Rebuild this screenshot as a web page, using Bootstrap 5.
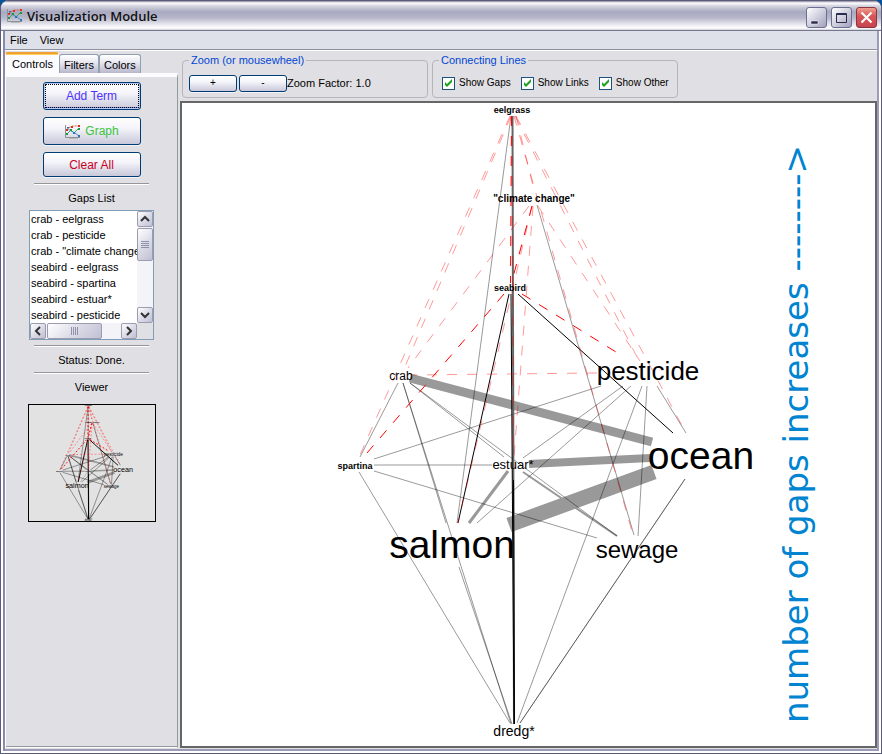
<!DOCTYPE html>
<html lang="en">
<head>
<meta charset="utf-8">
<meta name="viewport" content="width=device-width, initial-scale=1">
<title>Visualization Module</title>
<link href="https://cdn.jsdelivr.net/npm/bootstrap@5.3.0/dist/css/bootstrap.min.css" rel="stylesheet">
<style>
  body { font: 11px/16px "Liberation Sans", Arial, sans-serif; color: #000; background: #00539c; }
  .app-window { background: #e0dfe3; border: 1px solid #5c5b78; border-radius: 8px 8px 0 0; box-shadow: inset 2px 0 #fff, inset -2px -2px #fff, inset 4px 0 #8b8aab, inset -4px -4px #9c9bb8; padding: 0 4px 5px 4px; }
  .title-bar { height: 30px; margin: 0 -4px; padding: 0 4px 0 5px; border-radius: 7px 7px 0 0; border-bottom: 1px solid #77778f;
    background: linear-gradient(#85849c 0, #fff 2px, #d4d4e0 5px, #a8a8c0 11px, #b8b8cc 17px, #e4e4ec 23px, #fff 27px, #b8b8c8 30px); }
  .title-bar h1 { font: 600 13px/18px "Open Sans", "Noto Sans", sans-serif; color: #111; }
  .win-btn { width: 21px; height: 21px; padding: 0; border: 1px solid #6a7090; border-radius: 3px; background: linear-gradient(135deg, #fff, #d0d0e0 50%, #a0a0bc); }
  .win-close { border-color: #8c3440; background: linear-gradient(#f0a090, #d85858 40%, #c84450); }
  .menu-bar { height: 19px; padding: 0 5px; background: #dee1ea; border-bottom: 1px solid #8f8fa0; box-shadow: 0 1px #fff; }
  .menu-bar button { border: 0; background: none; padding: 0; color: #000; line-height: 16px; }
  .work-area { padding-top: 2px; min-height: 0; }
  .side-pane { width: 173px; }
  .main-pane { min-width: 0; padding-left: 2px; }
  .tab-strip { height: 21px; }
  .tab-strip button { border: 1px solid #91a0b0; border-bottom: 0; border-radius: 3px 3px 0 0; background: linear-gradient(#fff, #e8e8f0 40%, #b8b8cc); padding: 2px 4px 0; height: 19px; line-height: 16px; color: #000; }
  .tab-strip .tab-on { height: 21px; border-color: #fcfcfe; border-top: 2px solid #f0a030; background: linear-gradient(#ffd060 1px, #fcfcfe 1px); padding: 0 6px; width: 54px; }
  .tab-body { border: 1px solid #fcfcfe; border-top: 4px solid #fcfcfe; border-right: 1px solid #8f9c98; padding-top: 5px; box-shadow: inset 0 -1px #8f9c98; }
  .xp-btn { border: 1px solid #003c74; border-radius: 3px; background: linear-gradient(#fff, #f4f4fa 40%, #c8c8da); box-shadow: 0 1px #f4f4f8; padding: 0; color: #000; }
  .action-list { display: grid; gap: 7px; }
  .side-btn { width: 98px; height: 28px; font-size: 12px; }
  .side-btn.add { color: #4c33ff; box-shadow: inset 0 0 0 1px #b8c8f4, inset 0 -2px #7a8ee0; outline: 1px dotted #000; outline-offset: -3px; }
  .side-btn.graph { color: #3cc43c; }
  .side-btn.clear { color: #cc0022; height: 25px; }
  .etched { width: 115px; height: 2px; margin: 6px 0 5px; border-top: 1px solid #969698; border-bottom: 1px solid #fff; }
  .etched + div { margin-bottom: -2px; }
  .gap-box { width: 125px; border: 1px solid #7f9db9; display: grid; grid-template-columns: 1fr 16px; grid-template-rows: 112px 16px; }
  .gap-box + .etched { margin-top: 5px; }
  .gap-box select { appearance: none; border: 0; border-radius: 0; padding: 2px 0 0; margin: 0; background: #fff; overflow: hidden; scrollbar-width: none; height: 112px; width: 100%; outline: 0; font: inherit; color: #000; }
  .gap-box select::-webkit-scrollbar { display: none; }
  .gap-box option { padding: 0 1px; min-height: 16px; line-height: 16px; }
  .track { background: #f4f4f8; }
  .track button { width: 16px; height: 16px; border: 1px solid #9c9cb0; border-radius: 2px; background: linear-gradient(135deg, #fff, #dcdce8 50%, #c0c0d4); padding: 0; line-height: 0; }
  .track .thumb-v { height: 33px; margin-top: 1px; }
  .track .thumb-h { width: 55px; margin-left: 1px; }
  .viewer { width: 128px; height: 118px; margin-top: 11px; border: 1px solid #000; background: #e2e2e2; --hair: 5px; }
  .tool-bar { gap: 4px; padding: 0 0 3px 2px; }
  .tool-box { border: 1px solid #b8b4bc; border-radius: 4px; height: 46px; padding: 0 6px; }
  .tool-box legend { float: none; width: auto; font-size: 11px; line-height: 16px; padding: 0 2px; margin: 0; color: #0046d5; }
  .zoom-box, .line-box { width: 246px; }
  .line-box > div { padding-left: 3px; }
  .tool-row { height: 30px; white-space: nowrap; }
  .zoom-btn { width: 48px; height: 17px; font-size: 10px; line-height: 14px; margin-right: 2px; }
  .zoom-btn + .zoom-btn { margin-right: 0; }
  .check { appearance: none; flex: none; width: 13px; height: 13px; margin: 0; border: 1px solid #1c5180; background: linear-gradient(135deg, #dcdcd7, #fff); }
  .check:checked { background: #fff url("data:image/svg+xml,%3Csvg xmlns='http://www.w3.org/2000/svg' viewBox='0 0 11 11'%3E%3Cpath d='M2 4v3l2 2 5-5V1L4 6z' fill='%2321a121'/%3E%3C/svg%3E") center/11px; }
  .line-box label { font-size: 10px; margin: 0 10px 0 4px; }
  .canvas-frame { border: 2px solid #666; background: #fff; min-height: 0; --hair: 1px; }
  .edge { stroke: #000; stroke-opacity: .4; stroke-width: var(--hair); fill: none; }
  .solid { stroke: #000; stroke-width: var(--hair); fill: none; }
  .gap-soft { stroke: #f00; stroke-opacity: .4; stroke-width: var(--hair); stroke-dasharray: 10 10; fill: none; }
  .gap-hard { stroke: #f00; stroke-width: var(--hair); stroke-dasharray: 10 10; fill: none; }
  .band { stroke: #999; fill: none; }
  .node { text-anchor: middle; font-family: "Liberation Sans", Arial, sans-serif; fill: #000; }
  .axis-note { font: 34px "DejaVu Sans", Verdana, sans-serif; fill: #0084d1; }
</style>
<script src="https://cdn.jsdelivr.net/npm/bootstrap@5.3.0/dist/js/bootstrap.bundle.min.js"></script>
</head>
<body>
<svg width="0" height="0" class="position-absolute" aria-hidden="true">
  <defs>
    <symbol id="chart" viewBox="0 0 17 15">
      <path d="M1.500 1v12.500H16" fill="none" stroke="#8c9096"/><path d="M5 14.500h9" stroke="#bbb"/>
      <path d="M3 10l4-4 3 3 5-5" fill="none" stroke="#35a555"/>
      <path d="M3 4l4 3 4 2 4 3" fill="none" stroke="#4a90c0"/>
      <path d="M3 6l3-3 3-1h6" fill="none" stroke="#e06040" stroke-dasharray="2 1"/>
      <path d="M2 5h2v2H2zM7 2h2v2H7zM14 1h2v2h-2z" fill="#e03020"/>
      <path d="M2 9h2v2H2zM6 5h2v2H6zM14 4h2v2h-2z" fill="#18983c"/>
      <path d="M9 8h2v2H9zM14 11h2v2h-2zM3 3h2v1H3z" fill="#2878b8"/>
    </symbol>
    <g id="net">
      <path class="band" stroke-width="9" d="M410 378L652 442"/>
      <path class="band" stroke-width="8" d="M529 464L650 458"/>
      <path class="band" stroke-width="15" d="M509 525L654 472"/>
      <path class="band" stroke-width="3" d="M508 471L469 523"/>
      <path class="band" stroke-width="2" d="M523 472L617 536"/>
      <path class="edge" d="M511 116L457 523"/>
      <path class="edge" d="M537 205L634 535"/>
      <path class="edge" d="M410 383L504 457"/>
      <path class="edge" d="M410 383L617 536"/>
      <path class="edge" d="M403 383L446 523"/>
      <path class="edge" d="M403 383L511 724"/>
      <path class="edge" d="M459 567L512 724"/>
      <path class="edge" d="M398 383L360 457"/>
      <path class="edge" d="M374 459L601 386"/>
      <path class="edge" d="M374 465L492 465"/>
      <path class="edge" d="M374 471L597 538"/>
      <path class="edge" d="M359 472L510 723"/>
      <path class="edge" d="M623 386L523 458"/>
      <path class="edge" d="M631 386L477 523"/>
      <path class="edge" d="M642 386L517 723"/>
      <path class="edge" d="M647 386L638 536"/>
      <path class="edge" d="M657 386L686 433"/>
      <path class="edge" d="M685 479L520 723"/>
      <path class="edge" d="M685 479L520 723"/>
      <path stroke="#666" stroke-width="2" d="M512.500 116L514 724"/>
      <path class="solid" d="M511 294L514 724"/>
      <path class="solid" d="M513.500 480L514.500 724"/>
      <path class="solid" d="M509 294L458 523"/>
      <path class="solid" d="M518 294L673 433"/>
      <path class="gap-soft" d="M511 116L404 369"/>
      <path class="gap-soft" d="M510 116L360 455"/>
      <path class="gap-soft" d="M515 116L639 361"/>
      <path class="gap-soft" d="M516 116L686 433"/>
      <path class="gap-soft" d="M516 116L534 190"/>
      <path class="gap-soft" d="M514 116L633 535"/>
      <path class="gap-soft" d="M512 116L513 455"/>
      <path class="gap-soft" d="M529 206L408 368"/>
      <path class="gap-soft" d="M532 206L458 523"/>
      <path class="gap-soft" d="M533 206L514 457"/>
      <path class="gap-soft" d="M538 206L640 361"/>
      <path class="gap-soft" d="M597 373L413 375"/>
      <path class="gap-hard" d="M511.500 116L510.500 283"/>
      <path class="gap-hard" d="M532 206L512 281"/>
      <path class="gap-hard" d="M504 294L367 453"/>
      <path class="gap-hard" d="M522 294L616 352"/>
      <text class="node" x="512" y="113" font-size="9" font-weight="700">eelgrass</text>
      <text class="node" x="534" y="202" font-size="10" font-weight="700">"climate change"</text>
      <text class="node" x="510" y="291" font-size="9" font-weight="700">seabird</text>
      <text class="node" x="355" y="469" font-size="9" font-weight="700">spartina</text>
      <text class="node" x="401" y="380" font-size="12">crab</text>
      <text class="node" x="513" y="469" font-size="13">estuar*</text>
      <text class="node" x="514" y="736" font-size="14">dredg*</text>
      <text class="node" x="648" y="380" font-size="26">pesticide</text>
      <text class="node" x="637" y="558" font-size="24">sewage</text>
      <text class="node" x="701" y="469" font-size="39">ocean</text>
      <text class="node" x="452" y="558" font-size="39">salmon</text>
    </g>
  </defs>
</svg>

<div class="app-window vh-100 d-flex flex-column">
  <header class="title-bar d-flex align-items-center gap-1 flex-shrink-0">
    <svg width="17" height="15"><use href="#chart"/></svg>
    <h1 class="m-0 me-auto">Visualization Module</h1>
    <div class="d-flex gap-1 pt-1">
      <button class="win-btn d-flex" aria-label="Minimize"><svg width="19" height="19"><path d="M4 13h7v3H4z" fill="#2c2c4c" stroke="#fff" stroke-width=".5"/></svg></button>
      <button class="win-btn d-flex" aria-label="Maximize"><svg width="19" height="19"><path d="M4.500 5.500h10v9h-10zM4 6.500h11" fill="none" stroke="#2c2c4c"/></svg></button>
      <button class="win-btn win-close d-flex" aria-label="Close"><svg width="19" height="19"><path d="M4.500 4.500l10 10M14.500 4.500l-10 10" stroke="#fff" stroke-width="2.200"/></svg></button>
    </div>
  </header>
  <nav class="menu-bar d-flex align-items-center gap-2 flex-shrink-0" aria-label="Menu">
    <button class="me-1">File</button><button>View</button>
  </nav>
  <div class="work-area d-flex flex-fill">
    <aside class="side-pane d-flex flex-column flex-shrink-0">
      <div class="tab-strip d-flex align-items-end" role="tablist">
        <button class="tab-on" role="tab" aria-selected="true">Controls</button>
        <button role="tab">Filters</button>
        <button role="tab">Colors</button>
      </div>
      <div class="tab-body flex-fill d-flex flex-column align-items-center">
        <div class="action-list">
          <button class="xp-btn side-btn add">Add Term</button>
          <button class="xp-btn side-btn graph d-flex align-items-center justify-content-center gap-1"><svg width="17" height="15"><use href="#chart"/></svg>Graph</button>
          <button class="xp-btn side-btn clear">Clear All</button>
        </div>
        <div class="etched"></div>
        <label for="gaps" class="mb-1">Gaps List</label>
        <div class="gap-box">
          <select id="gaps" size="7">
            <option>crab - eelgrass</option><option>crab - pesticide</option><option>crab - "climate change"</option><option>seabird - eelgrass</option><option>seabird - spartina</option><option>seabird - estuar*</option><option>seabird - pesticide</option>
          </select>
          <div class="track d-flex flex-column">
            <button aria-label="Scroll up"><svg width="14" height="14"><path d="M3 9l4-4 4 4" fill="none" stroke="#333" stroke-width="2"/></svg></button>
            <button class="thumb-v mb-auto" aria-label="Vertical position"><svg width="8" height="8"><path d="M0 .5h8M0 2.500h8M0 4.500h8M0 6.500h8" stroke="#9090a8"/></svg></button>
            <button aria-label="Scroll down"><svg width="14" height="14"><path d="M3 5l4 4 4-4" fill="none" stroke="#333" stroke-width="2"/></svg></button>
          </div>
          <div class="track d-flex">
            <button aria-label="Scroll left"><svg width="14" height="14"><path d="M9 3L5 7l4 4" fill="none" stroke="#333" stroke-width="2"/></svg></button>
            <button class="thumb-h me-auto" aria-label="Horizontal position"><svg width="8" height="8"><path d="M.5 0v8M2.500 0v8M4.500 0v8M6.500 0v8" stroke="#9090a8"/></svg></button>
            <button aria-label="Scroll right"><svg width="14" height="14"><path d="M5 3l4 4-4 4" fill="none" stroke="#333" stroke-width="2"/></svg></button>
          </div>
        </div>
        <div class="etched"></div>
        <div>Status: Done.</div>
        <div class="etched"></div>
        <div>Viewer</div>
        <svg class="viewer" viewBox="192 107 681 627" role="img" aria-label="Network overview"><use href="#net"/></svg>
      </div>
    </aside>
    <main class="main-pane flex-fill d-flex flex-column">
      <div class="tool-bar d-flex flex-shrink-0">
        <fieldset class="tool-box zoom-box">
          <legend>Zoom (or mousewheel)</legend>
          <div class="tool-row d-flex align-items-center">
            <button class="xp-btn zoom-btn">+</button><button class="xp-btn zoom-btn">-</button><span>Zoom Factor: 1.0</span>
          </div>
        </fieldset>
        <fieldset class="tool-box line-box">
          <legend>Connecting Lines</legend>
          <div class="tool-row d-flex align-items-center">
            <input class="check" type="checkbox" id="c1" checked><label for="c1">Show Gaps</label>
            <input class="check" type="checkbox" id="c2" checked><label for="c2">Show Links</label>
            <input class="check" type="checkbox" id="c3" checked><label for="c3">Show Other</label>
          </div>
        </fieldset>
      </div>
      <div class="canvas-frame flex-fill">
        <svg class="d-block w-100 h-100" viewBox="182 103 693 643" role="img" aria-label="Term network">
          <use href="#net"/>
          <text class="axis-note" transform="translate(808 723) rotate(-90)">number of gaps increases --------&gt;</text>
        </svg>
      </div>
    </main>
  </div>
</div>
</body>
</html>
